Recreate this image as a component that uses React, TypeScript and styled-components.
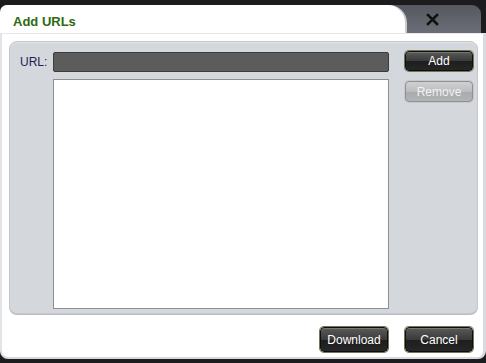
import React from "react";
import styled, { createGlobalStyle } from "styled-components";

const GlobalStyle = createGlobalStyle`
  html, body {
    margin: 0;
    padding: 0;
    background: #1c1c1e;
  }
  body {
    font-family: "Liberation Sans", Arial, sans-serif;
  }
`;

const Screen = styled.div`
  width: 486px;
  height: 363px;
  padding-top: 5px;
  box-sizing: border-box;
  background: #1c1c1e;
  overflow: hidden;
`;

const Dialog = styled.div`
  width: 486px;
  height: 354px;
  display: flex;
  flex-direction: column;
`;

const Header = styled.div`
  height: 28px;
  margin-right: 5px;
  display: flex;
  background: linear-gradient(#55585f, #6b6e76);
  border-radius: 7px 9px 0 0;
`;

const TitleBar = styled.div`
  flex: 1;
  background: #fff;
  border-radius: 7px 18px 0 0;
  box-shadow: 2px 0 0 #c9cbd0;
  padding: 9px 0 0 13px;
  box-sizing: border-box;
`;

const Title = styled.div`
  font-family: "Liberation Sans", Tahoma, sans-serif;
  font-weight: bold;
  font-size: 13px;
  color: #2d6a10;
`;

const CloseTab = styled.button`
  width: 76px;
  border: 0;
  background: transparent;
  padding: 1px 0 0 21px;
  display: flex;
  align-items: center;
  justify-content: flex-start;
  cursor: pointer;
`;

const Body = styled.div`
  flex: 1;
  background: #fff;
  border-left: 2px solid #e2e3e7;
  border-right: 3px solid #d9dade;
  border-bottom: 2px solid #d9dade;
  border-top: 1px solid #e6e7ea;
  border-radius: 0 0 8px 8px;
  padding: 7px 5px 0 7px;
  display: flex;
  flex-direction: column;
`;

const Panel = styled.div`
  height: 273px;
  box-sizing: border-box;
  background: #d4d7dc;
  border: 1px solid #c4c7cc;
  border-radius: 8px;
  padding: 9px 4px 4px 10px;
  display: grid;
  grid-template-columns: 33px 336px 1fr;
  grid-template-rows: 20px 1fr;
  row-gap: 8px;
  box-shadow: inset 0 1px 0 #e0e2e6, 0 1px 0 #b9bcc2;
`;

const Label = styled.label`
  font-size: 12px;
  color: #1f1f52;
  align-self: center;
  padding-top: 1px;
`;

const UrlInput = styled.input`
  height: 20px;
  box-sizing: border-box;
  background: #5c5c5c;
  border: 1px solid #3c3c3c;
  border-radius: 2px;
  color: #fff;
  font-size: 12px;
  padding: 0 4px;
  outline: none;
  margin-top: 1px;
`;

const UrlList = styled.div`
  background: #fff;
  border: 1px solid #8e8f93;
`;

const Side = styled.div`
  justify-self: end;
  display: flex;
  flex-direction: column;
  padding-top: 2px;
`;

const Button = styled.button<{ $disabled?: boolean; $h?: number }>`
  justify-self: end;
  width: 68px;
  height: ${(p) => p.$h ?? 20}px;
  box-sizing: border-box;
  border-radius: 4px;
  font-family: "Liberation Sans", Arial, sans-serif;
  font-size: 12px;
  padding: 0;
  cursor: pointer;
  color: ${(p) => (p.$disabled ? "#f2f2f2" : "#fff")};
  border: 1px solid ${(p) => (p.$disabled ? "#8f9093" : "#0e0e0e")};
  background: ${(p) =>
    p.$disabled
      ? "linear-gradient(#cfd0d2 0%, #bcbdbf 50%, #a9aaac 51%, #b3b4b6 100%)"
      : "linear-gradient(#5a5a5a 0%, #3a3a3a 50%, #1e1e1e 51%, #262626 100%)"};
  box-shadow: ${(p) =>
    p.$disabled
      ? "0 0 0 1px #c6c8cc"
      : "0 0 0 1px #6b7a52, inset 0 1px 0 #777"};
`;

const Footer = styled.div`
  flex: 1;
  display: flex;
  justify-content: flex-end;
  align-items: flex-start;
  gap: 17px;
  padding: 13px 5px 0 0;
`;

const CloseIcon = () => (
  <svg width="13" height="13" viewBox="0 0 13 13">
    <path d="M2 2 L11 11 M11 2 L2 11" stroke="#111" strokeWidth="2.6" strokeLinecap="square" />
  </svg>
);

export default function App() {
  return (
    <>
      <GlobalStyle />
      <Screen>
        <Dialog>
          <Header>
            <TitleBar>
              <Title>Add URLs</Title>
            </TitleBar>
            <CloseTab aria-label="Close">
              <CloseIcon />
            </CloseTab>
          </Header>
          <Body>
            <Panel>
              <Label>URL:</Label>
              <UrlInput />
              <Button>Add</Button>
              <div />
              <UrlList />
              <Side>
                <Button $disabled $h={21}>
                  Remove
                </Button>
              </Side>
            </Panel>
            <Footer>
              <Button $h={25}>Download</Button>
              <Button $h={25}>Cancel</Button>
            </Footer>
          </Body>
        </Dialog>
      </Screen>
    </>
  );
}
